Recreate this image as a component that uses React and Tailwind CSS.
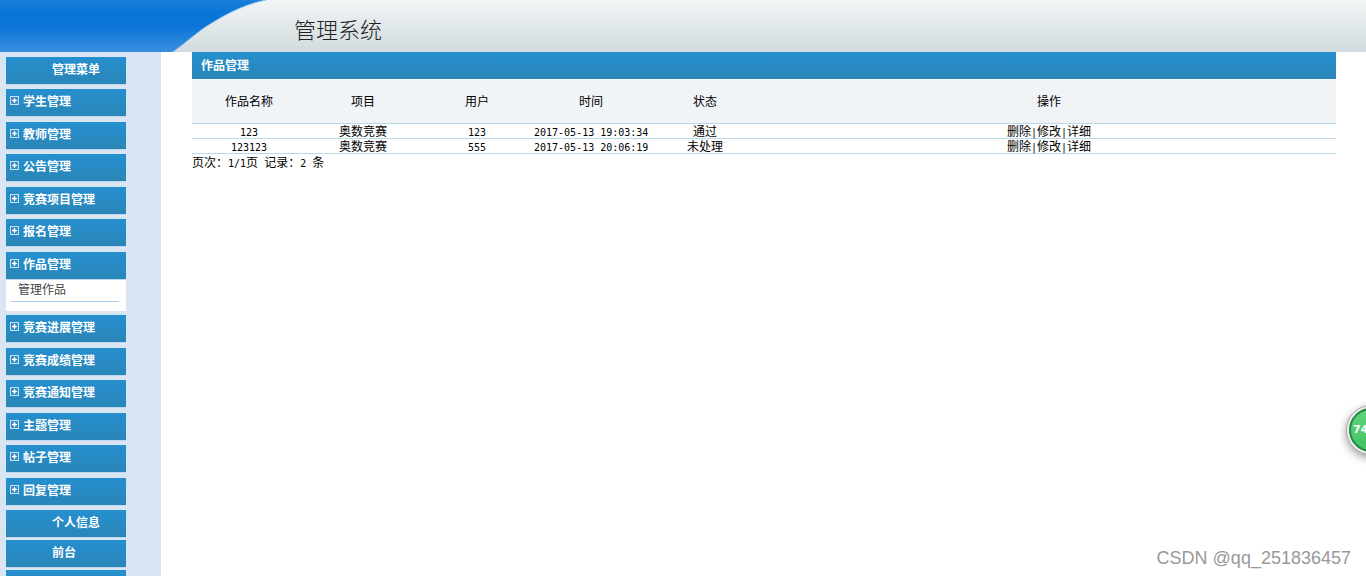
import React from 'react';

const menuItems = [
  { name: '学生管理' },
  { name: '教师管理' },
  { name: '公告管理' },
  { name: '竞赛项目管理' },
  { name: '报名管理' },
  { name: '作品管理', children: ['管理作品'] },
  { name: '竞赛进展管理' },
  { name: '竞赛成绩管理' },
  { name: '竞赛通知管理' },
  { name: '主题管理' },
  { name: '帖子管理' },
  { name: '回复管理' },
];

const columns = ['作品名称', '项目', '用户', '时间', '状态', '操作'];

const works = [
  { name: '123', project: '奥数竞赛', user: '123', time: '2017-05-13 19:03:34', status: '通过' },
  { name: '123123', project: '奥数竞赛', user: '555', time: '2017-05-13 20:06:19', status: '未处理' },
];

const barClass =
  'block h-7 border-b border-[#bfd8ef] bg-linear-to-b from-[#258fcf] to-[#2a86b7] text-xs leading-6 font-bold text-white';

// Latin characters of the table text
function Mono({ children }) {
  return <span className="font-['DejaVu_Sans_Mono',monospace] text-[10px] leading-none">{children}</span>;
}

function PlusIcon() {
  return (
    <svg className="mb-px h-[9px] w-[9px]" viewBox="0 0 9 9" shapeRendering="crispEdges">
      <rect x="0.5" y="0.5" width="8" height="8" fill="#3d8fc4" stroke="#c3e3f5" />
      <path d="M2 4h5v1H2zM4 2h1v5H4z" fill="#fff" />
      <path d="M3 3h3v3H3z" fill="#fff" fillOpacity="0.5" />
    </svg>
  );
}

function Header() {
  return (
    <header className="flex h-[52px] shrink-0 bg-linear-to-b from-[#f3f6f7] to-[#d1dbde]">
      <svg className="h-[52px] w-[270px] shrink-0" viewBox="0 0 270 52">
        <defs>
          <linearGradient id="blue" x1="0" y1="0" x2="0" y2="1">
            <stop offset="0" stopColor="#1b7fdb" />
            <stop offset="0.25" stopColor="#0975d6" />
            <stop offset="0.5" stopColor="#0b76d7" />
            <stop offset="1" stopColor="#3a8fdf" />
          </linearGradient>
        </defs>
        <path d="M0 0H266C241 5 221 17 204 28C193 36 184 44 173 52H0Z" fill="url(#blue)" />
        <path d="M266 0C241 5 221 17 204 28C193 36 184 44 173 52" fill="none" stroke="#9cc8ee" strokeWidth="1" />
      </svg>
      <h1 className="pt-3 pl-6 text-[22px] leading-8 font-light text-[#222]">管理系统</h1>
    </header>
  );
}

function Sidebar() {
  return (
    <nav className="w-[161px] shrink-0 bg-[#dae5f4] pt-[5px] pl-1.5">
      <ul className="w-[120px]">
        <li className={`${barClass} mb-1 pl-[46px]`}>管理菜单</li>
        {menuItems.map((item, index) => (
          <li key={item.name} className={index % 2 === 0 ? 'mb-[5px]' : 'mb-1'}>
            <a href="#" className={barClass}>
              <span className="flex items-center gap-1 pl-1">
                <PlusIcon />
                {item.name}
              </span>
            </a>
            {item.children && (
              <ul className="h-[31px] bg-white px-[5px]">
                {item.children.map((child) => (
                  <li key={child} className="mr-0.5 border-b border-[#a9cbe6] pb-1 pl-[7px] text-xs leading-[17px] text-[#444]">
                    <a href="#">{child}</a>
                  </li>
                ))}
              </ul>
            )}
          </li>
        ))}
        <li className="mb-0.5">
          <a href="#" className={`${barClass} pl-[46px]`}>个人信息</a>
        </li>
        <li className="mb-0.5">
          <a href="#" className={`${barClass} pl-[46px]`}>前台</a>
        </li>
        <li className={barClass} />
      </ul>
    </nav>
  );
}

function WorksTable() {
  return (
    <main className="mr-[30px] ml-[31px] min-w-0 flex-1 text-xs text-black">
      <h2 className="h-[27px] bg-linear-to-b from-[#258fcf] to-[#2a86b7] pl-[9px] leading-[26px] font-bold text-white">
        作品管理
      </h2>
      <table className="w-full table-fixed border-collapse text-center whitespace-nowrap">
        <thead>
          <tr className="h-11 border-b border-[#b9daeb] bg-[#f0f4f7]">
            {columns.map((column) => (
              <th key={column} className={column === '操作' ? 'p-0 font-normal' : 'w-[114px] p-0 font-normal'}>
                {column}
              </th>
            ))}
          </tr>
        </thead>
        <tbody>
          {works.map((work) => (
            <tr key={work.name} className="border-b border-[#b9daeb] leading-[14px] *:p-0">
              <td><Mono>{work.name}</Mono></td>
              <td>{work.project}</td>
              <td><Mono>{work.user}</Mono></td>
              <td><Mono>{work.time}</Mono></td>
              <td>{work.status}</td>
              <td>
                <a href="#">删除</a>
                <Mono>|</Mono>
                <a href="#">修改</a>
                <Mono>|</Mono>
                <a href="#">详细</a>
              </td>
            </tr>
          ))}
        </tbody>
      </table>
      <p className="leading-[15px]">
        页次：<Mono>1/1</Mono>页<Mono> </Mono>记录：<Mono>2 </Mono>条
      </p>
    </main>
  );
}

export default function App() {
  return (
    <div className="relative flex h-screen flex-col overflow-hidden bg-white font-['Noto_Sans_CJK_SC',sans-serif]">
      <Header />
      <div className="flex min-h-0 flex-1">
        <Sidebar />
        <WorksTable />
      </div>

      {/* Floating score ball, half hidden behind the right edge */}
      <div className="absolute -right-[30px] bottom-[121px] h-[50px] w-[50px] rounded-full border border-[#aaa] bg-[#eee] p-0.5 shadow-[0_3px_8px_rgba(0,0,0,0.4)]">
        <div className="h-full rounded-full border-2 border-[#218a45] bg-linear-to-b from-[#5fd47c] to-[#43c162] pl-0.5 font-['DejaVu_Sans',sans-serif] text-[11px] leading-10 font-bold text-white">
          74
        </div>
      </div>

      <span className="absolute right-[15px] bottom-1.5 font-['Liberation_Sans',sans-serif] text-lg leading-6 text-[#999]">
        CSDN @qq_251836457
      </span>
    </div>
  );
}
